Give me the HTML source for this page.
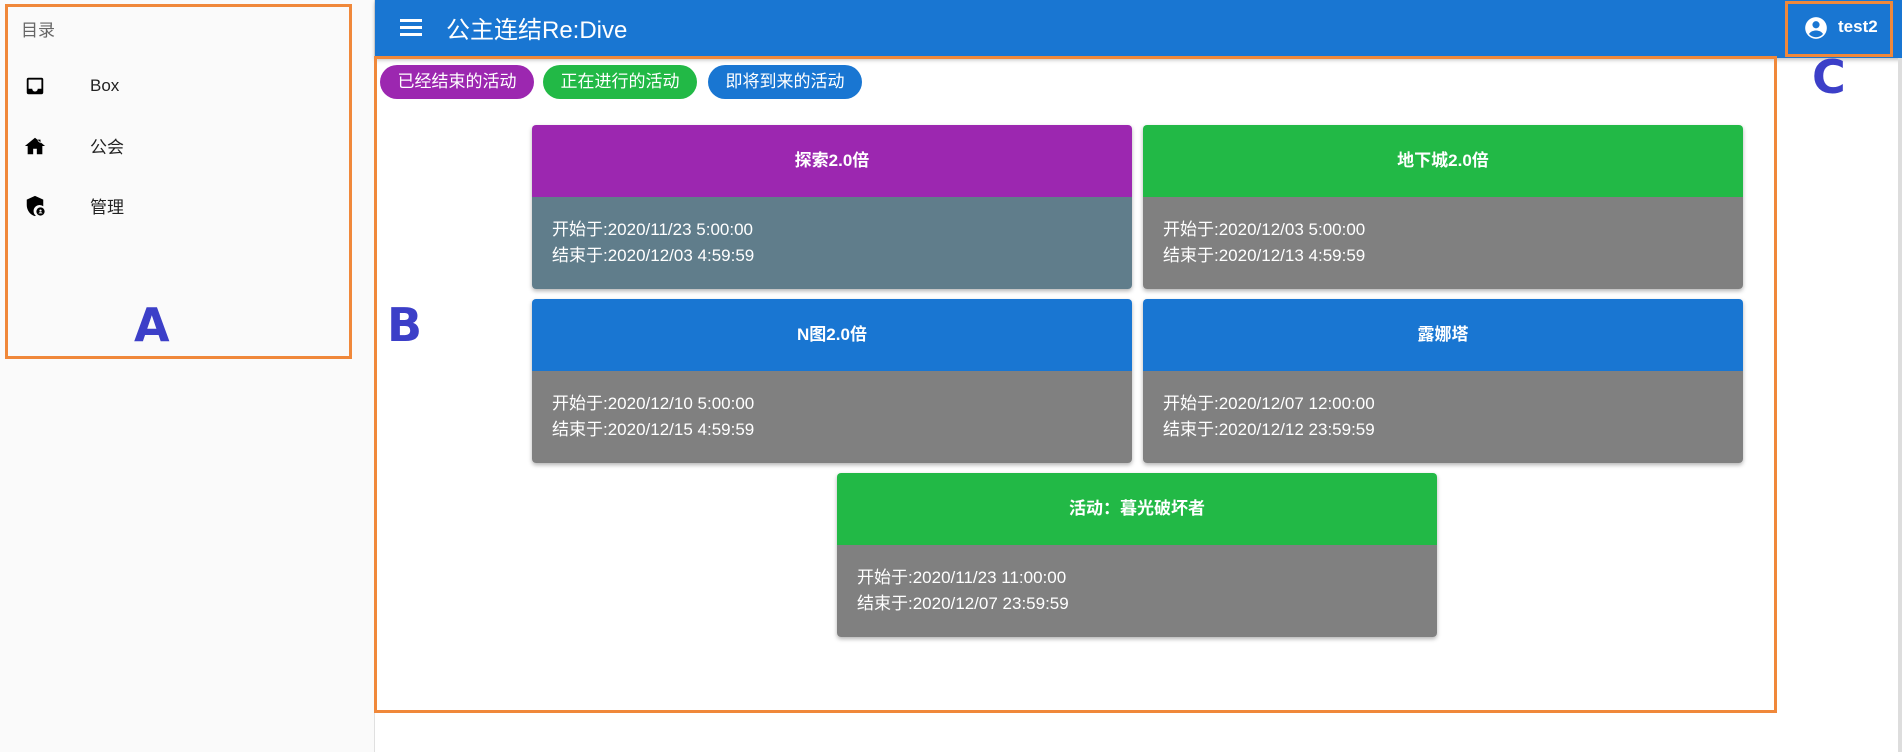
<!DOCTYPE html>
<html><head><meta charset="utf-8"><style>
*{margin:0;padding:0;box-sizing:border-box}
body{width:1902px;height:752px;overflow:hidden;background:#fff;font-family:"Liberation Sans","Noto Sans CJK SC",sans-serif;position:relative}
.abs{position:absolute}
.side{left:0;top:0;width:375px;height:752px;background:#fafafa;border-right:1px solid #e0e0e0}
.bar{left:375px;top:0;width:1527px;height:58px;background:#1976d2;box-shadow:0 2px 4px rgba(0,0,0,.25)}
.ob{border:3px solid #f0883a}
.lbl{color:#3c3fc8;font-weight:bold;font-size:46px;font-family:"DejaVu Sans",sans-serif}
.chip{top:65px;height:34px;border-radius:17px;color:#fff;font-size:17px;line-height:34px;text-align:center}
.card{border-radius:4px;overflow:hidden;box-shadow:0 2px 4px rgba(0,0,0,.3);width:600px;height:164px}
.card .h{height:72px;line-height:72px;text-align:center;color:#fff;font-weight:bold;font-size:17px}
.card .b{height:92px;background:#808080;color:#fff;font-size:17px;padding:20px 0 0 20px;line-height:26px}
.nav{left:90px;font-size:17px;color:#222}
</style></head><body>
<div class="abs side"></div>
<div class="abs" style="left:21px;top:16px;font-size:17px;color:#666">目录</div>
<svg class="abs" style="left:24px;top:75px" width="22" height="22" viewBox="0 0 24 24"><path d="M19 3H5a2 2 0 0 0-2 2v14a2 2 0 0 0 2 2h14a2 2 0 0 0 2-2V5a2 2 0 0 0-2-2zm0 12h-4a3 3 0 0 1-6 0H5V5h14z"/></svg>
<div class="abs nav" style="top:76px">Box</div>
<svg class="abs" style="left:24px;top:135px" width="22" height="22" viewBox="0 0 24 24"><path d="M12 3 1 12h3v9h6v-6h4v6h6v-9h3zM15 5h3v4l-3-2.5z"/></svg>
<div class="abs nav" style="top:133px">公会</div>
<svg class="abs" style="left:24px;top:195px" width="22" height="22" viewBox="0 0 24 24"><path d="M12 1 3 5v6c0 5.5 3.8 10.7 9 12 .3-.1.7-.2 1-.3A6 6 0 0 1 21 12.3V5z"/><circle cx="18" cy="18" r="4.5"/><circle cx="18" cy="17" r="1.2" fill="#fff"/><path d="M15.8 20a2.5 2.5 0 0 1 4.4 0z" fill="#fff"/></svg>
<div class="abs nav" style="top:193px">管理</div>
<div class="abs ob" style="left:5px;top:4px;width:347px;height:355px"></div>
<div class="abs lbl" style="left:134px;top:298px">A</div>

<div class="abs bar"></div>
<div class="abs" style="left:400px;top:19px;width:22px;height:3px;background:#fff;box-shadow:0 7px 0 #fff,0 14px 0 #fff"></div>
<div class="abs" style="left:446px;top:10px;font-size:24px;color:#fff">公主连结Re:Dive</div>
<svg class="abs" style="left:1803px;top:15px" width="26" height="26" viewBox="0 0 24 24"><circle cx="12" cy="12" r="10" fill="#fff"/><circle cx="12" cy="9" r="3.3" fill="#1976d2"/><path d="M5.5 17.5c1.5-2.3 4-3.2 6.5-3.2s5 .9 6.5 3.2A8.5 8.5 0 0 1 5.5 17.5z" fill="#1976d2"/></svg>
<div class="abs" style="left:1838px;top:17px;font-size:17px;color:#fff;font-weight:bold">test2</div>
<div class="abs ob" style="left:1785px;top:1px;width:108px;height:56px"></div>
<div class="abs lbl" style="left:1812px;top:50px">C</div>
<div class="abs" style="left:1898px;top:58px;width:4px;height:694px;background:#ddd"></div>

<div class="abs chip" style="left:380px;width:154px;background:#9c27b0">已经结束的活动</div>
<div class="abs chip" style="left:543px;width:154px;background:#22b946">正在进行的活动</div>
<div class="abs chip" style="left:708px;width:154px;background:#1976d2">即将到来的活动</div>

<div class="abs card" style="left:532px;top:125px"><div class="h" style="background:#9c27b0">探索2.0倍</div><div class="b" style="background:#607d8b">开始于:2020/11/23 5:00:00<br>结束于:2020/12/03 4:59:59</div></div>
<div class="abs card" style="left:1143px;top:125px"><div class="h" style="background:#22b946">地下城2.0倍</div><div class="b">开始于:2020/12/03 5:00:00<br>结束于:2020/12/13 4:59:59</div></div>
<div class="abs card" style="left:532px;top:299px"><div class="h" style="background:#1976d2">N图2.0倍</div><div class="b">开始于:2020/12/10 5:00:00<br>结束于:2020/12/15 4:59:59</div></div>
<div class="abs card" style="left:1143px;top:299px"><div class="h" style="background:#1976d2">露娜塔</div><div class="b">开始于:2020/12/07 12:00:00<br>结束于:2020/12/12 23:59:59</div></div>
<div class="abs card" style="left:837px;top:473px"><div class="h" style="background:#22b946">活动：暮光破坏者</div><div class="b">开始于:2020/11/23 11:00:00<br>结束于:2020/12/07 23:59:59</div></div>

<div class="abs ob" style="left:374px;top:56px;width:1403px;height:657px"></div>
<div class="abs lbl" style="left:387px;top:298px">B</div>
</body></html>
